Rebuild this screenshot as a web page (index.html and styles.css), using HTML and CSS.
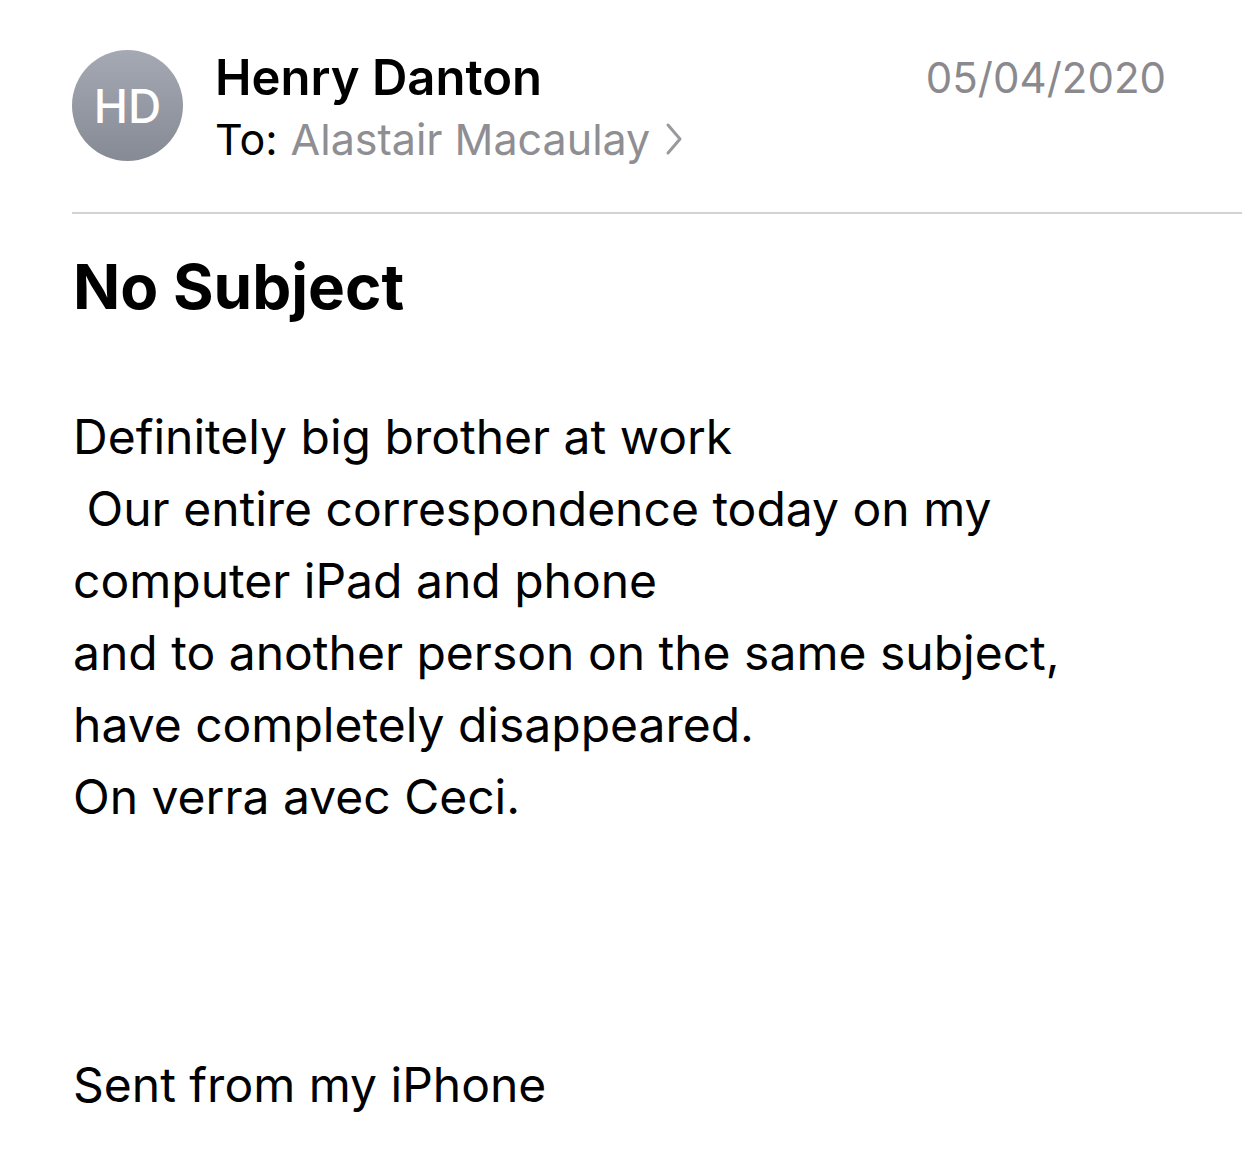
FILE: index.html
```html
<!DOCTYPE html>
<html lang="en">
<head>
    <meta charset="UTF-8">
    <meta name="viewport" content="width=device-width, initial-scale=1.0">
    <title>No Subject</title>
    <link rel="stylesheet" href="styles.css">
</head>
<body>
    <div class="mail">
        <div class="header">
            <div class="avatar">HD</div>
            <div class="sender">
                <div class="name">Henry Danton</div>
                <div class="to">To: <span class="recipient">Alastair Macaulay</span>
                    <svg class="chevron" width="20" height="36" viewBox="0 0 20 36">
                        <path d="M4 4 L16 18 L4 32" fill="none" stroke="#9a9a9e" stroke-width="3" stroke-linecap="round" stroke-linejoin="round"/>
                    </svg>
                </div>
            </div>
            <div class="date">05/04/2020</div>
        </div>
        <div class="separator"></div>
        <h1 class="subject">No Subject</h1>
        <div class="body">
            <div>Definitely big brother at work</div>
            <div>&nbsp;Our entire correspondence today on my</div>
            <div>computer iPad and phone</div>
            <div>and to another person on the same subject,</div>
            <div>have completely disappeared.</div>
            <div>On verra avec Ceci.</div>
            <div>&nbsp;</div>
            <div>&nbsp;</div>
            <div>&nbsp;</div>
            <div>Sent from my iPhone</div>
        </div>
    </div>
</body>
</html>
```

FILE: styles.css
```css
body {
    margin: 0;
    padding: 0;
    background: #ffffff;
    font-family: Inter, "Liberation Sans", sans-serif;
    color: #000000;
}
.mail {
    padding: 50px 0 0 72px;
}
.header {
    display: flex;
    align-items: flex-start;
    padding-right: 76px;
}
.avatar {
    width: 111px;
    height: 111px;
    border-radius: 50%;
    background: linear-gradient(#a5a9b3, #868a94);
    color: #ffffff;
    font-size: 46px;
    font-weight: 500;
    display: flex;
    align-items: center;
    justify-content: center;
    flex-shrink: 0;
}
.sender {
    margin-left: 32px;
    flex: 1;
}
.name {
    font-size: 49px;
    font-weight: 600;
    line-height: 56px;
}
.to {
    font-size: 43px;
    line-height: 60px;
    margin-top: 3px;
    display: flex;
    align-items: center;
}
.recipient {
    color: #8e8e93;
    margin-left: 13px;
}
.chevron {
    margin-left: 14px;
}
.date {
    font-size: 42px;
    line-height: 56px;
    color: #8a8a8e;
}
.separator {
    height: 2px;
    background: #d1d1d6;
    margin-top: 43px;
}
.subject {
    font-size: 62px;
    font-weight: 700;
    margin: 35px 0 0 1px;
    line-height: 76px;
}
.body {
    font-size: 48px;
    line-height: 72px;
    margin-top: 76px;
    margin-left: 1px;
}
```
